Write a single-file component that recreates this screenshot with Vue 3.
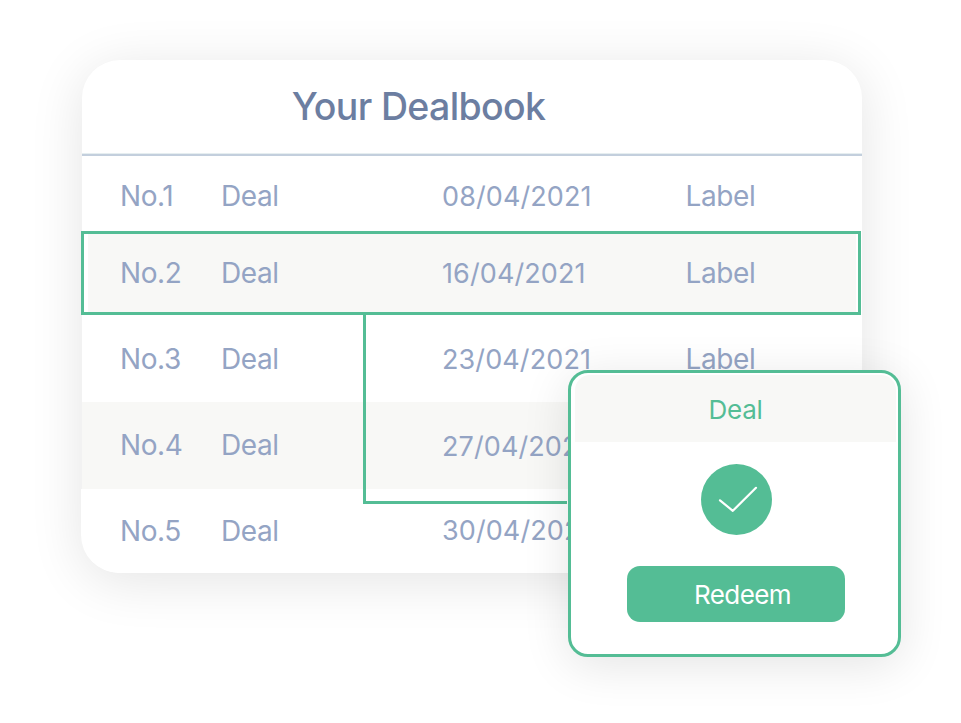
<script setup>
const rows = [
  { no: 'No.1', deal: 'Deal', date: '08/04/2021', label: 'Label' },
  { no: 'No.2', deal: 'Deal', date: '16/04/2021', label: 'Label', selected: true },
  { no: 'No.3', deal: 'Deal', date: '23/04/2021', label: 'Label' },
  { no: 'No.4', deal: 'Deal', date: '27/04/2021', label: '', shaded: true },
  { no: 'No.5', deal: 'Deal', date: '30/04/2021', label: '' }
]
</script>

<template>
  <main class="scene">
    <section class="book">
      <header class="book-head"><h1>Your Dealbook</h1></header>
      <div
        v-for="(row, i) in rows"
        :key="row.no"
        class="row"
        :class="['row-' + (i + 1), { selected: row.selected, shaded: row.shaded }]"
      >
        <span class="no">{{ row.no }}</span>
        <span class="deal">{{ row.deal }}</span>
        <span class="date">{{ row.date }}</span>
        <span class="label">{{ row.label }}</span>
      </div>
    </section>

    <div class="connector"></div>

    <aside class="popup">
      <div class="popup-head">Deal</div>
      <svg class="check" viewBox="0 0 71 71">
        <circle cx="35.5" cy="35.5" r="35.5" fill="#54bd95" />
        <path d="M19 36.3 31.8 46.8 55 23.8" fill="none" stroke="#fff" stroke-width="2.2" stroke-linecap="round" stroke-linejoin="round" />
      </svg>
      <button class="redeem">Redeem</button>
    </aside>
  </main>
</template>

<style>
body {
  background: #fff;
  overflow: hidden;
}
</style>

<style scoped>
.scene {
  position: relative;
  box-sizing: border-box;
  width: 961px;
  height: 723px;
  padding: 60px 99px 0 82px;
  overflow: hidden;
  font-family: Inter, "Liberation Sans", sans-serif;
  color: #94a4c4;
}
.book {
  display: grid;
  grid-template-rows: 96px 75px 84px 87px 87px 84px;
  width: 780px;
  border-radius: 38px;
  background: #fff;
  box-shadow: 0 8px 54px rgba(0, 0, 0, 0.11);
}
.book-head {
  display: flex;
  justify-content: center;
  align-items: center;
  box-sizing: border-box;
  padding: 0 107px 0 0;
  border-bottom: 2px solid #c3cfdd;
  box-shadow: inset 0 -1px #e6eef0;
}
h1 {
  margin: 0;
  font-size: 37.5px;
  line-height: 46px;
  font-weight: 450;
  letter-spacing: -0.65px;
  color: #6c7ea1;
  white-space: nowrap;
}
.row {
  display: grid;
  grid-template-columns: 101px 221px 243.5px 1fr;
  align-items: center;
  padding-left: 38px;
  font-size: 28px;
  line-height: 34px;
  font-weight: 420;
  letter-spacing: -0.4px;
  white-space: nowrap;
}
.date {
  padding-top: 2px;
  font-size: 27px;
  letter-spacing: 0.1px;
}
.row-1 {
  padding-top: 5px;
}
.selected {
  box-sizing: border-box;
  width: 780px;
  margin-left: -1px;
  padding-left: 36px;
  border: 3px solid #54bd95;
  background: #f8f8f6;
  box-shadow: inset 4px 0 #fff, inset -2px 0 #fff;
}
.shaded {
  background: #f8f8f6;
}
.row-4 .no,
.row-4 .deal {
  margin-top: -2px;
}
.row-5 {
  margin-left: -1px;
  padding-left: 39px;
  border-radius: 0 0 38px 38px;
  background: #fff;
}
.row-5 .date {
  padding-top: 0;
}
.connector {
  position: absolute;
  left: 363px;
  top: 315px;
  width: 201px;
  height: 186px;
  border-left: 3px solid #54bd95;
  border-bottom: 3px solid #54bd95;
}
.popup {
  position: absolute;
  left: 568px;
  top: 370px;
  box-sizing: border-box;
  display: flex;
  flex-direction: column;
  align-items: center;
  width: 333px;
  height: 287px;
  padding: 2px 2px 0 4px;
  border: 3px solid #54bd95;
  border-radius: 20px;
  background: #fff;
  box-shadow: 0 8px 48px rgba(0, 0, 0, 0.11);
}
.popup-head {
  display: flex;
  justify-content: center;
  align-items: center;
  align-self: stretch;
  height: 67px;
  padding-top: 2px;
  box-sizing: border-box;
  border-radius: 15px 15px 0 0;
  background: #f8f8f6;
  color: #54bd95;
  font-size: 26px;
  letter-spacing: -0.3px;
}
.check {
  width: 71px;
  height: 71px;
  margin: 22px 0 0 2px;
}
.redeem {
  width: 218px;
  height: 56px;
  margin-top: 31px;
  padding: 1px 0 0 14px;
  border: 0;
  border-radius: 13px;
  background: #54bd95;
  color: #fff;
  font: 400 26px Inter, "Liberation Sans", sans-serif;
  letter-spacing: -0.6px;
}
</style>
